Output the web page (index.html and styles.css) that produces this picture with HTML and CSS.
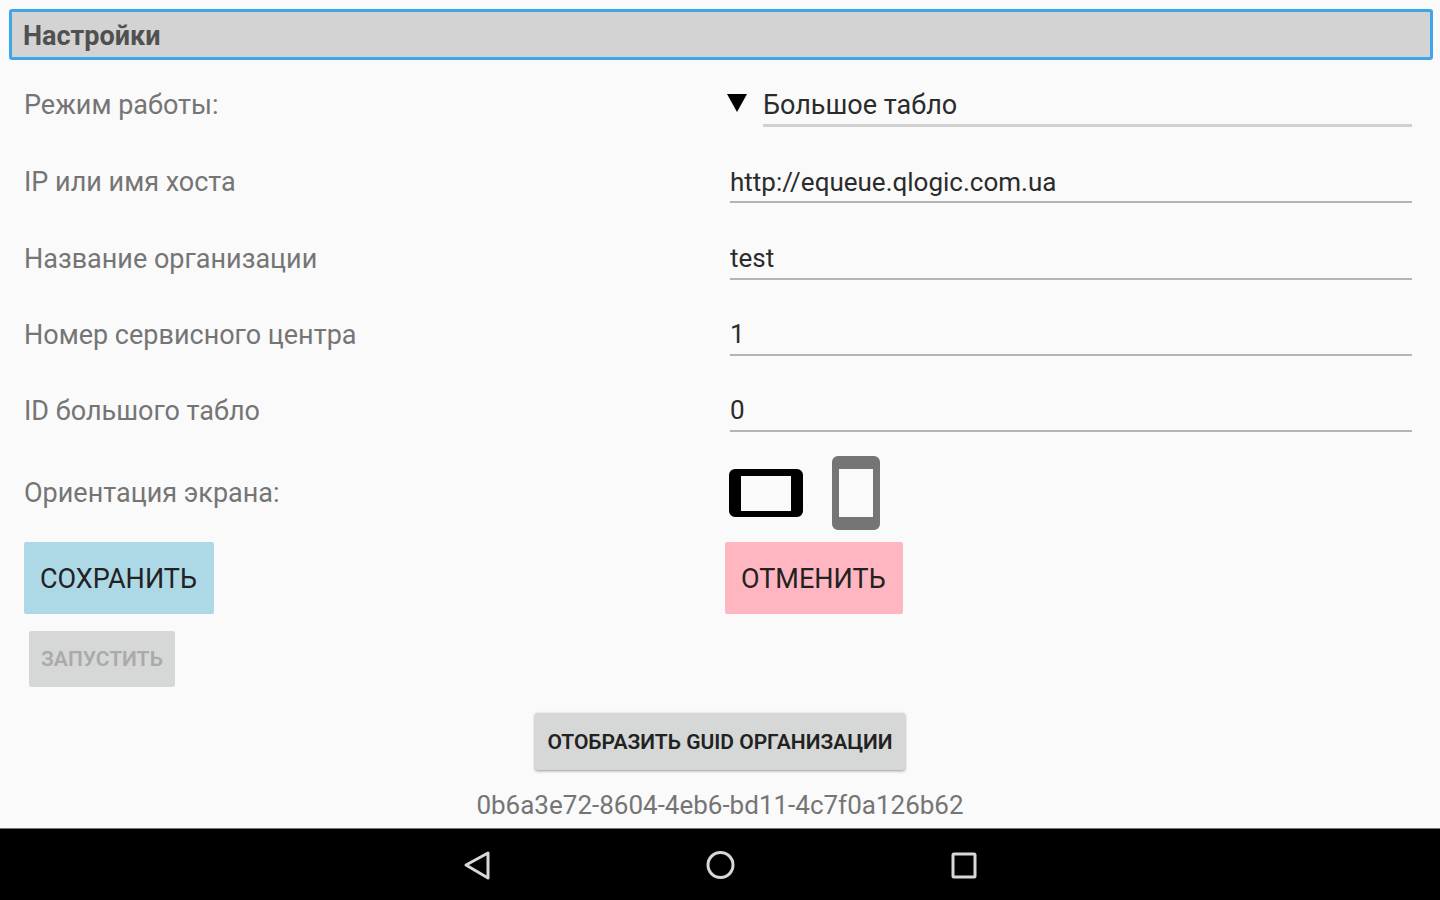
FILE: index.html
```
<!DOCTYPE html>
<html lang="ru">
<head>
    <meta charset="UTF-8">
    <meta name="viewport" content="width=device-width, initial-scale=1.0">
    <title>Настройки</title>
    <link rel="stylesheet" href="styles.css">
</head>
<body>
    <h1 class="title" tabindex="0">Настройки</h1>

    <form class="settings">
        <div class="row">
            <label for="mode">Режим работы:</label>
            <div class="field">
                <svg class="arrow" viewBox="0 0 20 18" aria-hidden="true"><path d="M0 0h20L10 18z"/></svg>
                <select id="mode" class="line">
                    <option>Большое табло</option>
                </select>
            </div>
        </div>
        <div class="row">
            <label for="host">IP или имя хоста</label>
            <div class="field">
                <input type="text" id="host" class="line" value="http://equeue.qlogic.com.ua" spellcheck="false">
            </div>
        </div>
        <div class="row">
            <label for="org">Название организации</label>
            <div class="field">
                <input type="text" id="org" class="line" value="test">
            </div>
        </div>
        <div class="row">
            <label for="center">Номер сервисного центра</label>
            <div class="field">
                <input type="text" id="center" class="line" value="1">
            </div>
        </div>
        <div class="row">
            <label for="board">ID большого табло</label>
            <div class="field">
                <input type="text" id="board" class="line" value="0">
            </div>
        </div>

        <div class="row orientation" role="radiogroup" aria-labelledby="orientationLabel">
            <span id="orientationLabel">Ориентация экрана:</span>
            <div class="icons">
                <label class="device">
                    <input type="radio" name="orientation" value="landscape" aria-label="Горизонтальная" checked>
                    <svg width="74" height="48" viewBox="0 0 74 48"><path fill-rule="evenodd" d="M6 0h62a6 6 0 0 1 6 6v36a6 6 0 0 1-6 6H6a6 6 0 0 1-6-6V6a6 6 0 0 1 6-6zM12 7v35h50V7z"/></svg>
                </label>
                <label class="device">
                    <input type="radio" name="orientation" value="portrait" aria-label="Вертикальная">
                    <svg width="48" height="74" viewBox="0 0 48 74"><path fill-rule="evenodd" d="M6 0h36a6 6 0 0 1 6 6v62a6 6 0 0 1-6 6H6a6 6 0 0 1-6-6V6a6 6 0 0 1 6-6zM7 13v48h34V13z"/></svg>
                </label>
            </div>
        </div>

        <div class="row buttons">
            <div><button type="submit" class="save">СОХРАНИТЬ</button></div>
            <div><button type="reset" class="cancel">ОТМЕНИТЬ</button></div>
        </div>
        <button type="button" class="small start" disabled>ЗАПУСТИТЬ</button>
    </form>

    <div class="guid">
        <button type="button" class="small show">ОТОБРАЗИТЬ GUID ОРГАНИЗАЦИИ</button>
        <p>0b6a3e72-8604-4eb6-bd11-4c7f0a126b62</p>
    </div>

    <nav class="navbar">
        <button type="button" aria-label="Назад">
            <svg viewBox="0 0 32 32"><path d="M27 4v25L5 16z"/></svg>
        </button>
        <button type="button" aria-label="Домой">
            <svg viewBox="0 0 32 32"><circle cx="16.5" cy="16" r="12.5"/></svg>
        </button>
        <button type="button" aria-label="Недавние">
            <svg viewBox="0 0 32 32"><rect x="6" y="5" width="22" height="23" rx="1"/></svg>
        </button>
    </nav>
</body>
</html>
```
FILE: styles.css
```
* {
    box-sizing: border-box;
}

body {
    display: flex;
    flex-direction: column;
    min-height: 100vh;
    margin: 0;
    background-color: #fafafa;
    color: #757575;
    font-family: Roboto, sans-serif;
    font-size: 27px;
    line-height: 32px;
}

.title {
    margin: 9px 7px 6px 9px;
    padding: 10px 11px 6px;
    border: 3px solid #3ea6e8;
    border-radius: 3px;
    background-color: #d3d3d3;
    color: #505050;
    font-size: 27px;
    line-height: 29px;
    font-weight: bold;
    outline: none;
}

.settings {
    flex: 1;
    display: flex;
    flex-direction: column;
    padding: 0 14px 0 24px;
}

.row {
    flex: 1;
    display: grid;
    grid-template-columns: 1fr 1fr;
    align-items: center;
}

.field {
    display: flex;
    align-items: center;
    padding: 0 14px 0 5px;
}

.line {
    flex: 1;
    min-width: 0;
    height: 42px;
    margin: 0;
    padding: 0;
    border: 0;
    border-bottom: 2px solid #b4b4b4;
    border-radius: 0;
    background: none;
    color: #2b2b2b;
    font-family: inherit;
    font-size: 26px;
    outline: none;
}

select.line {
    appearance: none;
    height: 44px;
    padding-top: 2px;
    border-bottom: 3px solid #d0d0d0;
    font-size: 27px;
}

input.line {
    padding-top: 1px;
}

.arrow {
    width: 20px;
    height: 18px;
    margin: 0 16px 4px -3px;
    fill: #000;
}

.orientation,
.buttons {
    flex: none;
}

.orientation {
    height: 88px;
}

.icons {
    display: flex;
    align-items: center;
    gap: 29px;
    padding-left: 4px;
}

.device {
    display: flex;
    color: #757575;
    cursor: pointer;
}

.device input {
    position: absolute;
    opacity: 0;
    margin: 0;
}

.device svg {
    fill: currentColor;
}

.device:has(input:checked) {
    color: #000;
}

button {
    border: 0;
    border-radius: 2px;
    font-family: inherit;
    cursor: pointer;
}

.buttons {
    margin-top: 5px;
}

.save,
.cancel {
    display: block;
    height: 72px;
    padding: 1px 17px 0 16px;
    background-color: #add8e6;
    color: #222;
    font-size: 27px;
}

.cancel {
    background-color: #ffb6c1;
}

.small {
    height: 56px;
    padding: 0 12px;
    background-color: #d6d7d7;
    color: #222;
    font-size: 21px;
    font-weight: 600;
}

.start {
    align-self: flex-start;
    margin: 17px 5px 0;
    color: #aaa;
}

.show {
    height: 57px;
    box-shadow: 0 1px 3px rgba(0, 0, 0, 0.4);
}

.guid {
    padding-top: 26px;
    text-align: center;
    font-size: 26px;
}

.guid p {
    margin: 19px 0 7px;
}

.navbar {
    display: flex;
    justify-content: center;
    gap: 211px;
    height: 72px;
    background-color: #000;
    border-top: 1px solid #777;
}

.navbar button {
    display: flex;
    align-items: center;
    padding: 0;
    background: none;
}

.navbar svg {
    width: 32px;
    height: 32px;
    fill: none;
    stroke: #d8d8d8;
    stroke-width: 3;
    stroke-linejoin: round;
}
```
